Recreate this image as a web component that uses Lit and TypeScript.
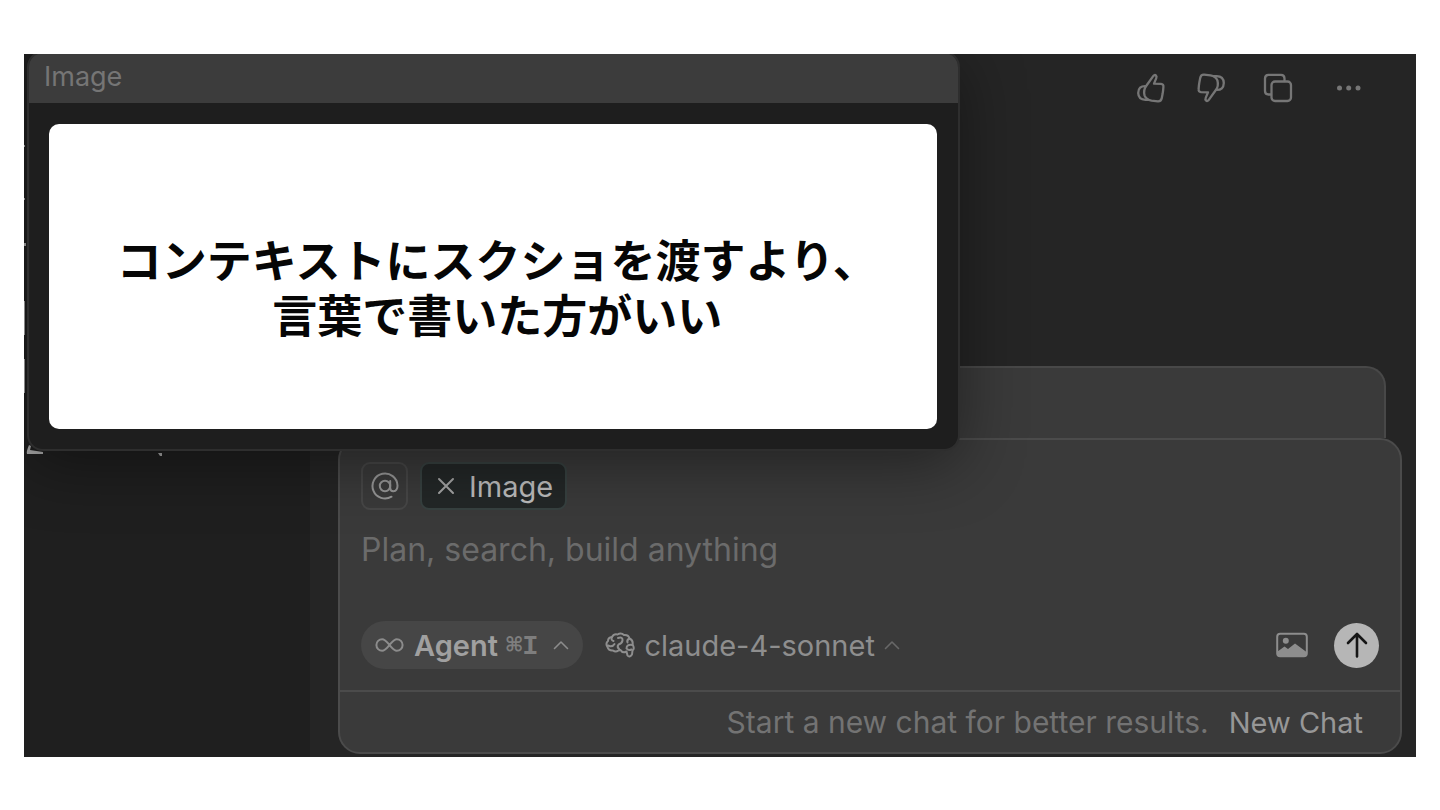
import { LitElement, html, css, svg } from "lit";
import { customElement, property, state } from "lit/decorators.js";

const thumbPath = svg`
  <path d="M9.5 12.5 L16.2 3.2 Q17.6 1.2 19 2.6 Q20 3.6 19.2 5.4 L17 10.6 L24 10.9 Q26.7 11.2 26.4 13.8 L26.1 17.5 L25.6 20.8 L24.8 25 Q24.2 28.4 21 28.3 L14.5 27.6 Q9.2 26.6 7.6 22.6 Q6 16.8 9.5 12.5 Z"/>
  <path d="M8.6 13.1 Q1.4 12.8 1.2 20 Q1.4 26.6 8.4 26.8 L11.2 26.9"/>`;

@customElement("image-preview")
class ImagePreview extends LitElement {
  static styles = css`
    :host {
      display: block;
      box-sizing: border-box;
      border: 2px solid #2e2e2e;
      border-radius: 16px;
      background: #1e1e1e;
      box-shadow: 0 12px 64px rgba(0, 0, 0, 0.42);
      overflow: hidden;
    }
    .title {
      margin: 0;
      padding: 8px 15px 10px;
      background: #3c3c3c;
      color: #757575;
      font-size: 27px;
      line-height: 32px;
      font-weight: 400;
    }
    .frame {
      padding: 21px 21px 20px 20px;
    }
    .slide {
      box-sizing: border-box;
      min-height: 305px;
      padding: 18px 0 0 9px;
      display: flex;
      align-items: center;
      justify-content: center;
      border-radius: 10px;
      background: #fff;
    }
    .slide-text {
      margin: 0;
      color: #060606;
      font-family: "Noto Sans CJK JP", sans-serif;
      font-size: 45px;
      line-height: 55px;
      font-weight: 700;
      text-align: center;
    }
  `;

  @property({ type: String }) heading = "Image";
  @property({ attribute: false }) lines: string[] = [];

  render() {
    return html`
      <h2 class="title">${this.heading}</h2>
      <div class="frame">
        <div class="slide">
          <p class="slide-text">
            ${this.lines.map((line, i) => (i ? html`<br />${line}` : line))}
          </p>
        </div>
      </div>
    `;
  }
}

@customElement("message-actions")
class MessageActions extends LitElement {
  static styles = css`
    :host {
      display: flex;
      justify-content: flex-end;
      align-items: center;
      gap: 38px;
      color: #767676;
    }
    .rating {
      display: flex;
      gap: 32px;
    }
    button {
      display: flex;
      padding: 0;
      border: 0;
      background: none;
      color: inherit;
      cursor: pointer;
    }
    svg {
      display: block;
      fill: none;
      stroke: currentColor;
      stroke-width: 2.3;
      stroke-linejoin: round;
      stroke-linecap: round;
    }
    .dots {
      fill: currentColor;
      stroke: none;
    }
  `;

  render() {
    return html`
      <div class="rating">
        <button aria-label="Good response">
          <svg width="28" height="30" viewBox="0 0 28 30">${thumbPath}</svg>
        </button>
        <button aria-label="Bad response">
          <svg width="28" height="30" viewBox="0 0 28 30">
            <g transform="rotate(180 14 15)">${thumbPath}</g>
          </svg>
        </button>
      </div>
      <button aria-label="Copy">
        <svg width="30" height="30" viewBox="0 0 30 30">
          <rect x="8.5" y="8.5" width="19.5" height="19.5" rx="3.5" />
          <path d="M8 21.5 H5.5 Q2 21.5 2 18 V5.5 Q2 1.8 5.5 1.8 H18 Q21.5 1.8 21.5 5.5 V8" />
        </svg>
      </button>
      <button aria-label="More">
        <svg class="dots" width="36" height="30" viewBox="0 0 36 30">
          <circle cx="8.5" cy="15" r="2.5" />
          <circle cx="17.7" cy="15" r="2.5" />
          <circle cx="27" cy="15" r="2.5" />
        </svg>
      </button>
    `;
  }
}

@customElement("chat-composer")
class ChatComposer extends LitElement {
  static styles = css`
    :host {
      display: block;
      box-sizing: border-box;
      border: 2px solid #4b4b4b;
      border-radius: 22px;
      background: #3a3a3a;
      overflow: hidden;
    }
    button {
      font: inherit;
      color: inherit;
      background: none;
      border: 0;
      padding: 0;
      margin: 0;
      cursor: pointer;
    }
    svg {
      display: block;
      flex: none;
      fill: none;
      stroke: currentColor;
      stroke-width: 2;
      stroke-linecap: round;
      stroke-linejoin: round;
    }
    .editor {
      display: flex;
      flex-direction: column;
      padding: 22px 21px 21px;
    }
    .context {
      display: flex;
      gap: 12px;
    }
    .mention,
    .chip {
      box-sizing: border-box;
      height: 48px;
      border: 2px solid #474747;
      border-radius: 9px;
      display: flex;
      align-items: center;
      justify-content: center;
    }
    .mention {
      width: 47px;
      color: #969696;
    }
    .chip {
      gap: 13px;
      padding: 0 12px 0 14px;
      border-color: #374140;
      background: #232727;
      color: #bcbcbc;
      font-size: 29px;
    }
    .cross {
      color: #a4a4a4;
    }
    .prompt {
      display: block;
      box-sizing: border-box;
      width: 100%;
      height: 40px;
      margin: 20px 0 51px;
      padding: 0;
      border: 0;
      outline: 0;
      resize: none;
      overflow: hidden;
      background: none;
      color: #ccc;
      font: inherit;
      font-size: 32px;
      line-height: 40px;
    }
    .prompt::placeholder {
      color: #6b6b6b;
      opacity: 1;
    }
    .toolbar {
      display: flex;
      align-items: center;
    }
    .mode {
      display: flex;
      align-items: center;
      height: 48px;
      padding: 0 14px;
      border-radius: 24px;
      background: #464646;
      color: #8c8c8c;
    }
    .mode-name {
      margin: 0 8px 0 10px;
      color: #a0a0a0;
      font-size: 29px;
      font-weight: 600;
    }
    .shortcut {
      margin-right: 15px;
      color: #7e7e7e;
      font-family: "Liberation Mono", "DejaVu Sans Mono", monospace;
      font-size: 27px;
      font-weight: 700;
    }
    .model {
      display: flex;
      align-items: center;
      margin-left: 22px;
      gap: 9px;
      color: #8e8e8e;
      font-size: 29px;
    }
    .chevron {
      stroke-width: 1.6;
    }
    .faint {
      color: #686868;
    }
    .right {
      display: flex;
      align-items: center;
      gap: 26px;
      margin-left: auto;
      color: #8d8d8d;
    }
    .send {
      display: grid;
      place-items: center;
      width: 45px;
      height: 45px;
      border-radius: 50%;
      background: #b6b6b6;
      color: #161616;
    }
    .footer {
      display: flex;
      justify-content: flex-end;
      align-items: baseline;
      gap: 20px;
      padding: 11px 37px 10px 20px;
      border-top: 2px solid #4b4b4b;
      color: #737373;
      font-size: 30px;
      line-height: 38px;
    }
    .new-chat {
      color: #979797;
      font-size: 29px;
    }
  `;

  @state() private text = "";

  render() {
    return html`
      <div class="editor">
        <div class="context">
          <button class="mention" aria-label="Add context">
            <svg width="28" height="28" viewBox="0 0 28 28">
              <circle cx="14" cy="14" r="5.2" />
              <path d="M19.2 9 V16 Q19.4 19.4 22.4 19.3 Q26.6 18.8 26.5 13.5 A12.5 12.5 0 1 0 20.5 24.7" />
            </svg>
          </button>
          <button class="chip">
            <svg class="cross" width="20" height="20" viewBox="0 0 20 20"><path d="M3 3 L17 17 M17 3 L3 17" /></svg>
            <span>Image</span>
          </button>
        </div>
        <textarea
          class="prompt"
          rows="1"
          aria-label="Message"
          placeholder="Plan, search, build anything"
          .value=${this.text}
          @input=${(e: Event) => (this.text = (e.target as HTMLTextAreaElement).value)}
        ></textarea>
        <div class="toolbar">
          <button class="mode">
            <svg width="29" height="16" viewBox="0 0 29 16">
              <path d="M14.5 8 C11.5 4.5 10 2.2 7.2 2.2 A5.8 5.8 0 0 0 7.2 13.8 C10 13.8 11.5 11.5 14.5 8 C17.5 4.5 19 2.2 21.8 2.2 A5.8 5.8 0 0 1 21.8 13.8 C19 13.8 17.5 11.5 14.5 8 Z" />
            </svg>
            <span class="mode-name">Agent</span>
            <span class="shortcut">⌘I</span>
            <svg class="chevron" width="16" height="10" viewBox="0 0 16 10"><path d="M1.5 8.500 L8 2 L14.5 8.500" /></svg>
          </button>
          <button class="model">
            <svg width="30" height="26" viewBox="0 0 30 26">
              <path d="M7 5 Q9 1.5 12.5 2.5 Q16 .2 19 3 Q23.5 2.5 24.5 6.5 Q28.5 8.5 27.5 12.5 Q30 16.5 27.5 18.5 L27 22.5 Q24.5 26 22.5 23.5 L21.5 19.5 Q17.5 21.5 15.5 18 L13.5 18.5 Q10.5 20.5 8 18.5 Q3.5 18.8 2.5 15 Q.2 11.5 3 9 Q3 5.5 7 5 Z" />
              <path d="M7 5 Q5.5 8 8.5 9 M3 13.5 Q7.5 15.5 9.5 12 M13 6 Q18 4.5 17.5 8.5 Q17 11.5 13.5 12.5 Q11.5 15 14.5 17.5 M24.5 6.500 Q21.5 8 22.5 10.5 M27.5 13 Q21.5 12 21.5 16.5 Q23.5 19 26.5 17.5" />
            </svg>
            <span>claude-4-sonnet</span>
            <svg class="chevron faint" width="16" height="10" viewBox="0 0 16 10"><path d="M1.5 8.500 L8 2 L14.5 8.500" /></svg>
          </button>
          <div class="right">
            <button aria-label="Attach image">
              <svg width="32" height="26" viewBox="0 0 32 26">
                <rect x="1.2" y="1.8" width="29.6" height="22.4" rx="3" />
                <circle cx="9.8" cy="8.8" r="3" fill="currentColor" stroke="none" />
                <path d="M1.500 19.500 L8.500 14.500 L12 17 L19 11.500 L30.500 20 V22 Q30 24 28 24 H4 Q2 24 1.500 22 Z" fill="currentColor" stroke="none" />
              </svg>
            </button>
            <button class="send" aria-label="Send">
              <svg width="24" height="28" viewBox="0 0 24 28"><path stroke-width="2.6" d="M12 25.5 V3 M3 12 L12 3 L21 12" /></svg>
            </button>
          </div>
        </div>
      </div>
      <div class="footer">
        <span>Start a new chat for better results.</span>
        <button class="new-chat">New Chat</button>
      </div>
    `;
  }
}

@customElement("app-root")
class AppRoot extends LitElement {
  static styles = css`
    :host {
      display: flex;
      box-sizing: border-box;
      min-height: 100vh;
      padding: 54px 24px 53px;
      background: #fff;
      font-family: Inter, "Noto Sans CJK JP", sans-serif;
    }
    .window {
      position: relative;
      flex: 1;
      display: grid;
      grid-template-columns: 286px 1fr;
      overflow: hidden;
      background: #252525;
    }
    .sidebar {
      background: #1f1f1f;
    }
    .remnants {
      display: block;
      fill: #a8a8a8;
    }
    .chat {
      display: flex;
      flex-direction: column;
      padding: 19px 14px 3px 28px;
    }
    .actions {
      margin-right: 35px;
    }
    .drawer {
      height: 70px;
      margin: auto 16px 0;
      border: 2px solid #484848;
      border-bottom: 0;
      border-radius: 20px 20px 0 0;
      background: #3a3a3a;
    }
    .preview {
      position: absolute;
      top: -3px;
      left: 3px;
      width: 67%;
    }
  `;

  private lines = ["コンテキストにスクショを渡すより、", "言葉で書いた方がいい"];

  render() {
    return html`
      <main class="window">
        <aside class="sidebar">
          <svg class="remnants" width="200" height="410" viewBox="0 0 200 410" aria-hidden="true">
            <path d="M0 91 h1 v2 h-1z M0 144 h1 v2 h-1z M0 189 h2 v3 h-2z" />
            <path d="M0 247 h1 v34 h-1z M0 305 h1 v34 h-1z" />
            <path d="M5 391 L7 392 L6 396 L19 398 V400 H3 Q2 398 5 391 Z M134 399 h4 v3 h-2z" />
          </svg>
        </aside>
        <section class="chat">
          <message-actions class="actions"></message-actions>
          <div class="drawer"></div>
          <chat-composer></chat-composer>
        </section>
        <image-preview class="preview" heading="Image" .lines=${this.lines}></image-preview>
      </main>
    `;
  }
}
